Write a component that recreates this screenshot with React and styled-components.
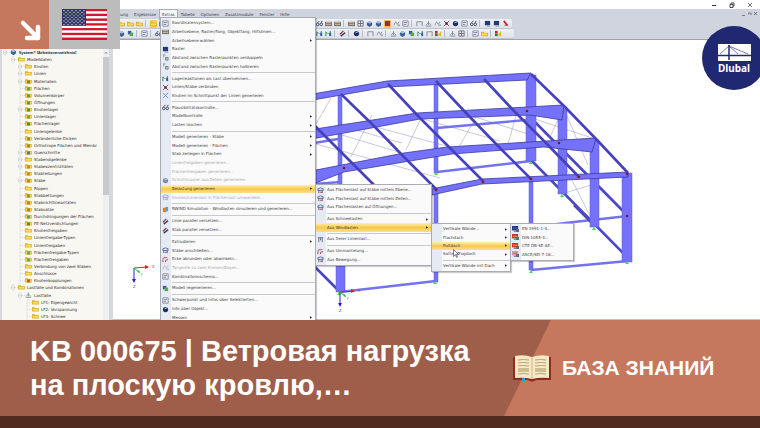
import React from "react";
import styled, { createGlobalStyle } from "styled-components";

const Global = createGlobalStyle`
  *, *::before, *::after { box-sizing: border-box; }
  html, body, #root { height: 100%; }
  body { margin: 0; background: #fff; font-family: "Liberation Sans", Arial, sans-serif; }
  button { font: inherit; color: inherit; border: 0; padding: 0; background: none; text-align: left; }
  ul { list-style: none; margin: 0; padding: 0; }
  svg { display: block; }
`;

const Page = styled.div`
  display: flex;
  flex-direction: column;
  min-height: 100%;
  overflow: hidden;
`;

/* ---------- application window ---------- */

const AppWindow = styled.section`
  position: relative;
  flex: 1;
  display: flex;
  flex-direction: column;
  overflow: hidden;
  font-family: "DejaVu Sans", Tahoma, sans-serif;
  font-size: 4px;
  line-height: 8px;
  color: #3c3c40;
`;

const TitleBar = styled.div`
  height: 9px;
  flex: none;
  display: flex;
  justify-content: flex-end;
  align-items: center;
  gap: 12px;
  padding-right: 7px;
`;

const WindowButton = styled.button`
  width: 6px;
  height: 6px;
`;

const Bars = styled.div`
  flex: none;
  height: 31px;
  background: #cfd4de;
  border-bottom: 1px solid #a3a3a3;
`;

const MenuBar = styled.nav`
  height: 10px;
  display: flex;
  align-items: center;
  gap: 2px;
  padding: 0 2px 0 102px;
`;

const MenuTab = styled.button`
  height: 9px;
  padding: 0 2px;
  line-height: 9px;
  background: ${(p) => (p.$open ? "#f4f4f6" : "transparent")};
  box-shadow: ${(p) => (p.$open ? "0 0 0 1px #a9adb8" : "none")};
`;

const MdiButtons = styled.div`
  margin-left: auto;
  display: flex;
  gap: 2px;
`;

const MdiButton = styled.button`
  width: 4px;
  height: 4px;
`;

const ToolRow = styled.div`
  height: 10px;
  width: ${(p) => p.$width}px;
  display: grid;
  grid-template-columns: 118px 198px 1fr;
  align-items: center;
  background: linear-gradient(#eef1f6, #dde1e9);
  border-bottom: 1px solid #bfc5d1;
  border-radius: 0 2px 2px 0;
`;

const ToolGroup = styled.div`
  grid-column: ${(p) => p.$col};
  display: flex;
  gap: 2px;
  overflow: hidden;
`;

const ToolButton = styled.button`
  width: 7px;
  height: 8px;
  flex: none;
  background: ${(p) => (p.$active ? "#ffc964" : "transparent")};
`;

const ToolGap = styled.span`
  width: 3px;
  height: 7px;
  flex: none;
  border-left: 1px solid #b5bac6;
`;

const Workspace = styled.div`
  flex: 1;
  min-height: 0;
  display: grid;
  grid-template-columns: 113px 1fr;
`;

const TreePanel = styled.aside`
  display: grid;
  grid-template-columns: 1fr 6px;
  min-height: 0;
  padding-top: 9px;
  background: #f8f7f1;
  border-left: 2px solid #d6d8de;
  border-right: 4px solid #d4d8e2;
`;

const TreeList = styled.ul`
  display: grid;
  grid-auto-rows: 1fr;
  min-width: 0;
  min-height: 0;
  overflow: hidden;
  line-height: 7px;
  color: #2c2c2c;
`;

const TreeItem = styled.li`
  display: flex;
  align-items: center;
  gap: 2px;
  min-height: 0;
  padding-left: ${(p) => [1, 9, 16, 23][p.$level]}px;
  ${(p) => p.$level === 0 && `font-family: "Noto Sans", sans-serif; font-weight: 700;`}
  white-space: nowrap;
`;

const TreeIcon = styled.svg`
  width: 14px;
  height: 7px;
  flex: none;
`;

const ScrollTrack = styled.div`
  background: #efeff0;
  display: grid;
  grid-template-rows: 8px 137fr 125fr;
`;

const ScrollThumb = styled.div`
  background: #c9c9cb;
`;

const Canvas = styled.div`
  min-width: 0;
  min-height: 0;
  background: #fff;
  border-bottom: 1px solid #b8c4d2;
`;

const Drawing = styled.svg`
  width: 100%;
  height: 100%;
`;

/* ---------- drop-down menus ---------- */

const MenuPanel = styled.div`
  position: absolute;
  left: ${(p) => p.$left}px;
  top: ${(p) => p.$top}px;
  width: ${(p) => p.$width}px;
  ${(p) => (p.$height ? `height: ${p.$height}px;` : "bottom: -4px;")}
  display: flex;
  flex-direction: column;
  padding: 1px 0;
  background: linear-gradient(90deg, #e6eaf3 10px, #fafafa 10px);
  border: 1px solid #a9acb4;
  box-shadow: 1px 1px 1px #0003;
`;

const MenuRow = styled.button`
  flex: 8 1 0;
  min-height: 0;
  display: grid;
  grid-template-columns: 8px 1fr 5px;
  column-gap: 2px;
  align-items: center;
  padding-left: 1px;
  white-space: nowrap;
  color: ${(p) => (p.$off ? "#a8a8ac" : "#3c3c40")};
  background: ${(p) => (p.$hot ? "linear-gradient(#fff0b4, #f7c94a 50%, #fbe08a)" : "transparent")};
`;

const MenuLine = styled.div`
  flex: 3 1 0;
  min-height: 0;
  margin-left: 11px;
  background: linear-gradient(#c9c9cd, #c9c9cd) center / 100% 1px no-repeat;
`;

const MenuGlyph = styled.svg`
  width: 7px;
  height: 7px;
`;

const Cursor = styled.svg`
  position: absolute;
  left: 453px;
  top: 249px;
  width: 6px;
  height: 9px;
`;

/* ---------- badges over the window ---------- */

const CornerBadge = styled.div`
  position: absolute;
  left: 0;
  top: 0;
  display: flex;
  height: 49px;
`;

const ArrowTile = styled.div`
  width: 49px;
  background: #c6785f;
`;

const FlagTile = styled.div`
  width: 71px;
  display: grid;
  place-items: center;
  background: #bcbcbc;
`;

const LogoBadge = styled.div`
  position: absolute;
  right: -6px;
  top: 26px;
  width: 64px;
  height: 64px;
  border-radius: 50%;
  background: #1f2870;
  display: flex;
  flex-direction: column;
  align-items: center;
  padding-top: 18px;
  color: #fff;
  font-family: "Noto Sans", "Open Sans", sans-serif;
  font-size: 10px;
  font-weight: 700;
  line-height: 14px;
`;

/* ---------- caption ---------- */

const Caption = styled.footer`
  flex: none;
  display: grid;
  grid-template-columns: 1fr 256px;
  border-bottom: 13px solid #522b20;
  background: #9f5e49;
  color: #fff;
`;

const Title = styled.h1`
  margin: 0;
  padding: 14px 0 14px 30px;
  font-size: 29px;
  line-height: 34px;
  font-weight: 700;
`;

const Category = styled.div`
  display: flex;
  align-items: center;
  gap: 11px;
  padding-left: 9px;
  position: relative;
  isolation: isolate;
  font-size: 21px;
  line-height: 24px;
  font-weight: 700;

  &::before {
    content: "";
    position: absolute;
    inset: 0;
    z-index: -1;
    background: #c6785f;
    clip-path: polygon(47px 0, 100% 0, 100% 100%, 0 100%);
  }
`;

/* ---------- small glyphs ---------- */

const glyphs = {
  folder: <><path d="M0 2h3l1 1h4v4H0z" fill="#e0b722" /><path d="M1 4h6v2H1z" fill="#f8df66" /></>,
  page: <><path d="M1 1h6v6H1z" fill="#fff" stroke="#7b7f92" /><path d="M2 3h4M2 5h3" stroke="#5d6b94" /></>,
  grid: <path d="M1 1h6v6H1zM1 4h6M4 1v6" fill="#eef" stroke="#667" />,
  cube: <><path d="M1 3l3-2 3 2v3L4 8 1 6z" fill="#3f5f92" /><path d="M1 3l3-2 3 2-3 1z" fill="#a5c5df" /></>,
  red: <><path d="M1 1h6v6H1z" fill="#b62b23" /><path d="M2 5l4-3M2 2v4" stroke="#274985" /></>,
  cross: <><path d="M1 1l6 6M7 1L1 7" stroke="#a92444" /><path d="M3 3l2 2" stroke="#333" strokeWidth="2" /></>,
  crossBlue: <path d="M1 1l6 6M7 1L1 7" stroke="#5389bb" />,
  glasses: <><circle cx="2" cy="5" r="1.5" fill="none" stroke="#29335f" /><circle cx="6" cy="5" r="1.5" fill="none" stroke="#29335f" /><path d="M2 3l2-2M6 3l1-2" stroke="#29335f" /></>,
  table: <><path d="M0 2h8v5H0z" fill="#777" /><path d="M1 3h6M1 5h6" stroke="#e3be8f" /></>,
  monitor: <><path d="M1 1h6v5H1z" fill="#243b78" /><path d="M3 7h4" stroke="#8b93a8" /></>,
  gray: <><path d="M1 6l2-4 2 3 2-3" fill="none" stroke="#8a8f9d" /><path d="M5 5h3v2H5z" fill="#aaa" /></>,
  halve: <><path d="M1 1h3M2 1v3M4 4h2" stroke="#8a8f9d" /><path d="M4 4h3v3H4z" fill="#c5c8d0" stroke="#747986" /></>,
  arrows: <><path d="M1 7V2l2 2M6 1v5L4 4" fill="none" stroke="#22854c" /><path d="M5 3h2v4H5z" fill="#3158a8" /></>,
  beams: <><path d="M1 5l4-4" stroke="#8d2945" strokeWidth="1.5" /><path d="M2 7l5-4" stroke="#3d4250" strokeWidth="1.5" /></>,
  arc: <path d="M1 7V4q0-3 5-2M4 7V5l3-1" fill="none" stroke="#a33353" />,
  support: <path d="M4 1v5M1 7h6M4 3l3 3M4 3L1 6" stroke="#7c8e98" fill="none" />,
  green: <><path d="M1 1h4v4H1z" fill="#3a5ca8" /><path d="M3 3h4v4H3z" fill="#57a84c" /></>,
  rainbow: <><path d="M0 1h3v3H0z" fill="#d22" /><path d="M0 4h3v3H0z" fill="#20802e" /><path d="M3 6l4-5v6z" fill="#e8b51e" /></>,
  globe: <><circle cx="4" cy="4" r="3" fill="#1c2d63" /><path d="M3 3l3-1" stroke="#d5e6f8" /></>,
  car: <><path d="M1 2h4v5H1z" fill="#e27d24" /><path d="M4 1h3v5H4z" fill="#55a0cc" /></>,
  load: <><path d="M1 2q3-2 6 0v2H1z" fill="#dfe5f4" stroke="#586a9c" /><path d="M2 3v4M6 3v4" stroke="#586a9c" /><path d="M3 6h3" stroke="#b2354a" /></>,
  lineLoad: <path d="M1 2h6M2 2v5M4 2v3M6 2v5" stroke="#5d6590" fill="none" />,
  frame: <path d="M1 7V2h6v5" fill="none" stroke="#7c828e" />,
  redArrow: <><path d="M2 1l4 5" stroke="#b52525" strokeWidth="2" /><path d="M3 6h4" stroke="#b52525" /></>,
};

const flagGlyph = (main, second) => (
  <>
    <path d="M0 0h7v5H0z" fill={main} />
    <path d="M1 2h5v1H1z" fill={second} />
    <path d="M2 6h6M5 4h3v2H5z" fill="#888" stroke="#555e72" />
  </>
);
glyphs.eu = flagGlyph("#233a86", "#4b62a8");
glyphs.de = flagGlyph("#c5362a", "#e5b23b");
glyphs.es = flagGlyph("#d33125", "#f3ce3d");
glyphs.us = flagGlyph("#d99aa0", "#7682ac");

/* ---------- data ---------- */

const tabs = ["Berechnung", "Ergebnisse", "Extras", "Tabelle", "Optionen", "Zusatzmodule", "Fenster", "Hilfe"];

const toolsTopLeft = ["folder", "folder", "folder", "|", "folder*", "table*", "page", "grid", "cube", "table"];
const toolsTop = ["glasses", "table", "table", "|", "table", "grid", "cube", "cube", "red*", "gray", "page", "|", "frame", "support", "gray", "cross", "globe", "page", "glasses", "|", "monitor", "monitor", "redArrow", "redArrow"];
const toolsLowLeft = ["cube", "green", "|", "page", "|", "glasses", "cube", "green"];
const toolsLow = ["arrows", "arrows", "|", "beams", "|", "globe", "|", "frame", "gray", "|", "support", "cube", "green", "arrows", "frame", "rainbow", "|", "support", "grid", "|", "page", "folder", "|", "rainbow"];

const tree = [
  [0, "System* [Arbeitsverzeichnis]", "cube", 1],
  [1, "Modelldaten", "folder", 1],
  [2, "Knoten", "folder", 1],
  [2, "Linien", "folder", 1],
  [2, "Materialien", "folder", 1, "#8a5a20"],
  [2, "Flächen", "folder", 0, "#4c8d42"],
  [2, "Volumenkörper", "folder", 0, "#637b37"],
  [2, "Öffnungen", "folder", 0, "#51803f"],
  [2, "Knotenlager", "folder", 1, "#3c7a2c"],
  [2, "Linienlager", "folder", 0, "#6c8d35"],
  [2, "Flächenlager", "folder", 0, "#267b32"],
  [2, "Liniengelenke", "folder", 0],
  [2, "Veränderliche Dicken", "folder", 0, "#697c67"],
  [2, "Orthotrope Flächen und Membr", "folder", 0, "#8a7738"],
  [2, "Querschnitte", "folder", 1, "#3a5a9b"],
  [2, "Stabendgelenke", "folder", 1],
  [2, "Stabexzentrizitäten", "folder", 1, "#bc7524"],
  [2, "Stabteilungen", "folder", 0, "#b57d21"],
  [2, "Stäbe", "folder", 1, "#b2722b"],
  [2, "Rippen", "folder", 0],
  [2, "Stabbettungen", "folder", 0, "#68803f"],
  [2, "Stabnichtlinearitäten", "folder", 0, "#b76e2b"],
  [2, "Stabsätze", "folder", 0, "#a96830"],
  [2, "Durchdringungen der Flächen", "folder", 0, "#467fa0"],
  [2, "FE-Netzverdichtungen", "folder", 0, "#58684d"],
  [2, "Knotenfreigaben", "folder", 0],
  [2, "Linienfreigabe-Typen", "folder", 0],
  [2, "Linienfreigaben", "folder", 0],
  [2, "Flächenfreigabe-Typen", "folder", 0, "#4b87ad"],
  [2, "Flächenfreigaben", "folder", 0, "#4b87ad"],
  [2, "Verbindung von zwei Stäben", "folder", 0],
  [2, "Anschlüsse", "folder", 0],
  [2, "Knotenkopplungen", "folder", 0, "#bb3920"],
  [1, "Lastfälle und Kombinationen", "folder", 1],
  [2, "Lastfälle", "support", 1],
  [3, "LF1: Eigengewicht", "folder", 0],
  [3, "LF2: Vorspannung", "folder", 0],
  [3, "LF3: Schnee", "folder", 0],
];

/* label, glyph, flags: ">" submenu, "-" disabled, "*" highlighted */
const extras = [
  ["Koordinatensystem...", "page"],
  ["Arbeitsebene, Raster/Fang, Objektfang, Hilfslinien...", "table"],
  ["Arbeitsebene wählen", null, ">"],
  ["Raster", "monitor"],
  ["Abstand zwischen Rasterpunkten verdoppeln", "halve"],
  ["Abstand zwischen Rasterpunkten halbieren", "halve"],
  null,
  ["Lagerreaktionen als Last übernehmen...", "arrows"],
  ["Linien/Stäbe verbinden", "cross"],
  ["Knoten im Schnittpunkt der Linien generieren", "crossBlue"],
  null,
  ["Plausibilitätskontrolle...", "glasses"],
  ["Modellkontrolle", null, ">"],
  ["Lasten löschen", null, ">"],
  null,
  ["Modell generieren - Stäbe", null, ">"],
  ["Modell generieren - Flächen", null, ">"],
  ["Stab zerlegen in Flächen", null, ">"],
  ["Linienfreigaben generieren...", null, "-"],
  ["Flächenfreigaben generieren...", null, "-"],
  ["Schnittmuster aus Zellen generieren", "globe", "-"],
  ["Belastung generieren", null, ">*"],
  ["Knoten/Linienlast in Flächenlast umwandeln...", "load", "-"],
  null,
  ["RWIND Simulation - Windlasten simulieren und generieren...", "car"],
  null,
  ["Linie parallel versetzen...", "beams"],
  ["Stab parallel versetzen...", "beams"],
  null,
  ["Extrudieren", null, ">"],
  ["Stäbe anschließen...", "load"],
  ["Ecke abrunden oder abwinkeln...", "arc"],
  ["Tangente zu zwei Kreisen/Bögen...", "gray", "-"],
  ["Kombinationsschema...", "page"],
  null,
  ["Modell regenerieren...", "green"],
  null,
  ["Schwerpunkt und Infos über Selektierten...", "page"],
  ["Info über Objekt...", "globe"],
  ["Messen", null, ">"],
];

const loads = [
  ["Aus Flächenlast auf Stäbe mittels Ebene...", "load"],
  ["Aus Flächenlast auf Stäbe mittels Zellen...", "load"],
  ["Aus Flächenlasten auf Öffnungen...", "load"],
  null,
  ["Aus Schneelasten", null, ">"],
  ["Aus Windlasten", null, ">*"],
  null,
  ["Aus freier Linienlast...", "lineLoad"],
  null,
  ["Aus Ummantelung...", "arc"],
  ["Aus Bewegung...", "load"],
];

const wind = [
  ["Vertikale Wände...", null, ">"],
  ["Flachdach", null, ">"],
  ["Pultdach", null, ">*"],
  ["Sattel-/Trogdach", null, ">"],
  null,
  ["Vertikale Wände mit Dach", null, ">"],
];

const norms = [
  ["EN 1991-1-4...", "eu"],
  ["DIN 1055-4...", "de"],
  ["CTE DB-SE-AE...", "es"],
  ["ASCE/SEI 7-16...", "us"],
];

/* ---------- pieces ---------- */

function Tools({ items, col }) {
  return (
    <ToolGroup $col={col}>
      {items.map((it, i) =>
        it === "|" ? (
          <ToolGap key={i} />
        ) : (
          <ToolButton key={i} type="button" aria-label={it.replace("*", "")} $active={it.endsWith("*")}>
            <svg viewBox="0 0 8 8" width="7" height="7">{glyphs[it.replace("*", "")]}</svg>
          </ToolButton>
        )
      )}
    </ToolGroup>
  );
}

function Menu({ items, ...place }) {
  return (
    <MenuPanel role="menu" {...place}>
      {items.map((it, i) => {
        if (!it) return <MenuLine key={i} />;
        const [label, glyph, flags = ""] = it;
        return (
          <MenuRow key={i} type="button" role="menuitem" disabled={flags.includes("-")} $off={flags.includes("-")} $hot={flags.includes("*")}>
            <MenuGlyph viewBox="0 0 8 8" opacity={flags.includes("-") ? 0.5 : 1}>{glyph && glyphs[glyph]}</MenuGlyph>
            <span>{label}</span>
            {flags.includes(">") && <svg viewBox="0 0 3 4" width="2" height="3"><path d="M0 0l3 2-3 2z" fill="#222" /></svg>}
          </MenuRow>
        );
      })}
    </MenuPanel>
  );
}

function Tree() {
  return (
    <TreeList>
      {tree.map(([level, label, glyph, expandable, tint]) => (
        <TreeItem key={label} $level={level}>
          <TreeIcon viewBox="0 0 14 7">
            <path d="M2 3.5h5M2 0v7" stroke="#c9c9c5" strokeWidth="0.6" strokeDasharray="1" />
            {expandable ? <path d="M0.5 2h3v3h-3zM1 3.5h2" fill="#fff" stroke="#b4b8c0" strokeWidth="0.5" /> : null}
            <g transform="translate(7 -0.5) scale(0.85)">{glyphs[glyph]}</g>
            {tint && <path d="M9 2.5h3v3H9z" fill={tint} opacity="0.8" />}
          </TreeIcon>
          <span>{label}</span>
        </TreeItem>
      ))}
    </TreeList>
  );
}

const purlins = [
  "M290 101L376 187",
  "M341 94L372 124L404 157L437 190",
  "M388 84L419 117L452 150L483 181",
  "M436 81L467 114L499 147L531 179",
  "M484 79L514 111L547 144L579 177",
  "M531 74L565 107L597 140L628 173",
];
const hidden = ["M530 117L624 212", "M530 159L630 260", "M574 205L594 225", "M314 266L338 290"];
const rails = [
  "M437 128L526 120", "M437 172L531 161", "M565 223L628 216", "M314 143L338 139",
  "M314 184L341 182", "M340 292L436 281", "M531 270L628 261", "M540 226L566 223",
];
const braces = [
  "M316 124L331 98", "M351 157L372 115", "M316 144L440 178", "M342 126L402 143", "M372 126L450 147",
  "M406 150L424 112", "M459 147L478 114", "M463 113L528 134", "M508 144L517 112", "M511 111L592 138",
  "M342 135L405 154", "M563 107L588 165", "M565 193L594 184", "M567 170L592 220", "M550 137L564 107", "M423 119L500 141",
];
const posts = [
  [338, 94, 4, 90], [434, 82, 4, 91], [526, 75, 10, 86],
  [558, 109, 9, 85], [590, 140, 9, 87], [434, 190, 4, 92], [529, 181, 4, 89], [622, 173, 10, 89], [336, 230, 9, 62],
];
const beams = [
  "M290 98L387 81L531 73L527 80L387 87L290 104z",
  "M290 133L417 113L564 105L562 120L530 115L420 119L290 143z",
  "M290 175L404 153L447 147L596 138L592 152L544 147L452 154L404 162L344 172L290 193z",
  "M350 209L436 188L482 179L628 172L628 177L482 184L436 194L350 216z",
];
const nodes = [[344, 168], [527, 111], [436, 190], [483, 182], [531, 179], [559, 143], [579, 177], [627, 174], [627, 216]];
const supports = [[436, 174], [531, 163], [562, 196], [594, 229], [435, 283], [531, 272], [627, 263], [339, 294]];

function Axes({ x, y }) {
  return (
    <g transform={`translate(${x} ${y})`} fontSize="4" fontFamily="Liberation Sans">
      <path d="M0 0L14-1" stroke="#d22" /><path d="M11-3l4 2-4 2z" fill="#d22" />
      <path d="M0 0V12" stroke="#22c" /><path d="M-2 11h4l-2 4z" fill="#22c" />
      <path d="M0 0L5 4" stroke="#2b2" /><path d="M3 4l3 1-1-3z" fill="#2b2" />
      <text x="18" y="0" fill="#d22">X</text>
      <text x="6" y="8" fill="#2b2">Y</text>
      <text x="-1" y="20" fill="#22c">Z</text>
    </g>
  );
}

function Model() {
  return (
    <Drawing viewBox="113 40 647 279" preserveAspectRatio="xMinYMin slice" role="img" aria-label="Hallentragwerk">
      <g fill="none" stroke="#a3a3cf" strokeWidth="0.6">{braces.map((d) => <path key={d} d={d} />)}</g>
      <g fill="none" stroke="#7472f0" strokeWidth="2.4">{rails.map((d) => <path key={d} d={d} />)}</g>
      <g fill="none" stroke="#4b46c4" strokeWidth="2.6">{hidden.map((d) => <path key={d} d={d} />)}</g>
      <g fill="#7472fa" stroke="#5e5bd8" strokeWidth="0.5">
        {posts.map(([x, y, w, h]) => <rect key={`${x}-${y}`} x={x} y={y} width={w} height={h} />)}
      </g>
      <g fill="#7472fa" stroke="#3d3a9c" strokeWidth="0.8">{beams.map((d) => <path key={d} d={d} />)}</g>
      <g fill="none" stroke="#4540bd" strokeWidth="2.6">{purlins.map((d) => <path key={d} d={d} />)}</g>
      {supports.map(([x, y]) => <path key={`${x}-${y}`} d={`M${x - 2} ${y + 1}h4l-2-3z`} fill="#3ee04a" />)}
      {nodes.map(([x, y]) => <circle key={`${x}-${y}`} cx={x} cy={y} r="1.3" fill="#8c1027" />)}
      <Axes x={134} y={268} />
      <Axes x={340} y={292} />
    </Drawing>
  );
}

function Flag() {
  const stripes = Array.from({ length: 13 }, (_, i) => i);
  const stars = [];
  for (let r = 0; r < 9; r++) {
    for (let c = 0; c < (r % 2 ? 5 : 6); c++) stars.push([2 + c * 4 + (r % 2 ? 2 : 0), 1.7 + r * 1.7]);
  }
  return (
    <svg viewBox="0 0 45 31" width="45" height="31" role="img" aria-label="USA">
      {stripes.map((i) => <rect key={i} y={(i * 31) / 13} width="45" height={31 / 13} fill={i % 2 ? "#fff" : "#d8142a"} />)}
      <rect width="24" height="16.7" fill="#2f3566" />
      {stars.map(([x, y], i) => <circle key={i} cx={x} cy={y} r="0.6" fill="#fff" />)}
    </svg>
  );
}

function Book() {
  return (
    <svg viewBox="0 0 38 27" width="38" height="27" aria-hidden="true">
      <path d="M0 2h38v23H23q-4 3-8 0H0z" fill="#8d2b22" />
      <path d="M2 1q9-2 17 1 8-3 17-1v22q-9-1-17 1-8-2-17-1z" fill="#f6e8c3" />
      <path d="M19 2v22" stroke="#cdb98c" />
      <path d="M5 5q5-1 11 0M22 5q6-1 11 0M5 8q5-1 11 0M22 8q6-1 11 0M5 11q5-1 11 0M5 19q5-1 11 0M22 19q6-1 11 0M22 11q6-1 11 0" fill="none" stroke="#b9a57c" />
      <path d="M5 13h11v4H5zM22 13h11v4H22z" fill="#cfbd92" />
      <path d="M9 23h3v4l-2-1-1 1z" fill="#1da4dc" />
    </svg>
  );
}

export default function App() {
  return (
    <Page>
      <Global />
      <AppWindow>
        <TitleBar>
          <WindowButton aria-label="Minimieren"><svg viewBox="0 0 6 6"><path d="M1 3.5h4" stroke="#333" /></svg></WindowButton>
          <WindowButton aria-label="Wiederherstellen"><svg viewBox="0 0 6 6"><path d="M1 2.5h3v3H1zM2 2V1h3v3H4" fill="none" stroke="#222" strokeWidth="0.8" /></svg></WindowButton>
          <WindowButton aria-label="Schließen"><svg viewBox="0 0 6 6"><path d="M1 1l4 4M5 1L1 5" stroke="#333" strokeWidth="0.7" /></svg></WindowButton>
        </TitleBar>
        <Bars>
          <MenuBar>
            {tabs.map((t) => <MenuTab key={t} type="button" $open={t === "Extras"}>{t}</MenuTab>)}
            <MdiButtons>
              <MdiButton aria-label="Fenster minimieren"><svg viewBox="0 0 4 4"><path d="M0 3.5h3" stroke="#555" strokeWidth="0.7" /></svg></MdiButton>
              <MdiButton aria-label="Fenster wiederherstellen"><svg viewBox="0 0 4 4"><path d="M0 3V1h3v2" fill="none" stroke="#555" strokeWidth="0.7" /></svg></MdiButton>
              <MdiButton aria-label="Fenster schließen"><svg viewBox="0 0 4 4"><path d="M0 0l3 3M3 0L0 3" stroke="#555" strokeWidth="0.7" /></svg></MdiButton>
            </MdiButtons>
          </MenuBar>
          <ToolRow $width={512}>
            <Tools items={toolsTopLeft} col={2} />
            <Tools items={toolsTop} col={3} />
          </ToolRow>
          <ToolRow $width={514}>
            <Tools items={toolsLowLeft} col={2} />
            <Tools items={toolsLow} col={3} />
          </ToolRow>
        </Bars>
        <Workspace>
          <TreePanel>
            <Tree />
            <ScrollTrack>
              <svg viewBox="0 0 6 8" width="6" height="8"><path d="M2 4.5l1-1 1 1" fill="none" stroke="#333" strokeWidth="0.8" /></svg>
              <ScrollThumb />
            </ScrollTrack>
          </TreePanel>
          <Canvas><Model /></Canvas>
        </Workspace>

        <Menu items={extras} $left={160} $top={17} $width={156} />
        <Menu items={loads} $left={315} $top={184} $width={117} $height={82} />
        <Menu items={wind} $left={431} $top={223} $width={80} $height={49} />
        <Menu items={norms} $left={510} $top={223} $width={64} $height={38} />
        <Cursor viewBox="0 0 6 9"><path d="M.5.5v7l2-2 1 3 1-.5-1-2.5h2z" fill="#fff" stroke="#333" strokeWidth="0.6" /></Cursor>

        <CornerBadge>
          <ArrowTile>
            <svg viewBox="0 0 49 49" width="49" height="49" aria-hidden="true">
              <path d="M23 23L38 38M38 27V38H27" fill="none" stroke="#fff" strokeWidth="4.5" strokeLinecap="round" strokeLinejoin="round" />
            </svg>
          </ArrowTile>
          <FlagTile><Flag /></FlagTile>
        </CornerBadge>

        <LogoBadge>
          <svg viewBox="0 0 33 17" width="33" height="17" aria-hidden="true">
            <path d="M0 0h33v17H0z" fill="#fff" />
            <path d="M0 11.5h33M11 1v15" stroke="#1f2870" strokeWidth="1.5" />
            <path d="M2 10L11 2L20 10M11 2L30 10" fill="none" stroke="#1f2870" strokeWidth="0.6" />
          </svg>
          <span>Dlubal</span>
        </LogoBadge>
      </AppWindow>

      <Caption>
        <Title>KB 000675 | Ветровая нагрузка<br />на плоскую кровлю,…</Title>
        <Category><Book /><span>БАЗА ЗНАНИЙ</span></Category>
      </Caption>
    </Page>
  );
}
